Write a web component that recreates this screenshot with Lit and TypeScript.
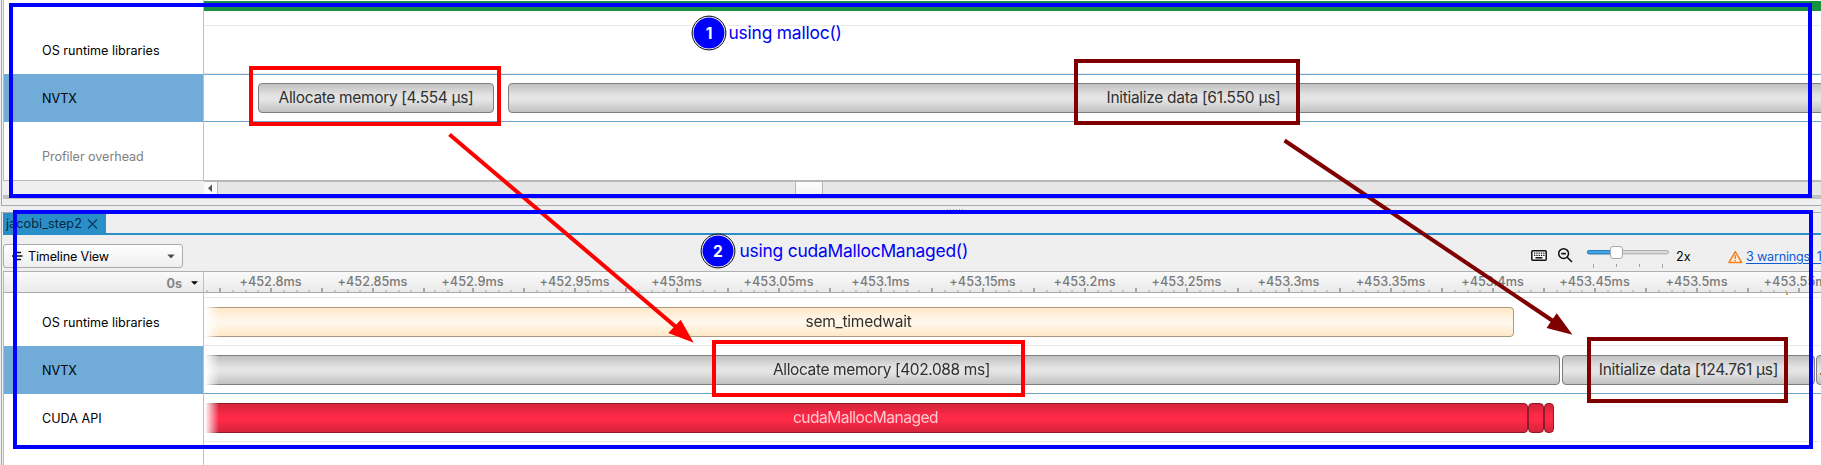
import { LitElement, html, svg, css, nothing } from "lit";
import { customElement, property } from "lit/decorators.js";
import { styleMap } from "lit/directives/style-map.js";

interface Bar {
  gap: number;
  width: number;
  tone: "gray" | "cream" | "red";
  label?: string;
  tracking?: number;
  fade?: boolean;
  start?: boolean;
}

/** One horizontal lane of range bars. */
@customElement("timeline-lane")
class TimelineLane extends LitElement {
  @property({ attribute: false }) bars: Bar[] = [];

  static styles = css`
    :host {
      display: flex;
      overflow: hidden;
      align-items: flex-start;
    }
    .bar {
      box-sizing: border-box;
      flex: none;
      height: 30px;
      border: 1px solid;
      border-radius: 4px;
      display: flex;
      align-items: center;
      justify-content: center;
      font-size: 15.5px;
      line-height: 28px;
      white-space: pre;
      overflow: hidden;
    }
    .start {
      justify-content: flex-start;
      padding-left: 2px;
    }
    .gray {
      color: #303030;
      border-color: #7f7f7f;
      background: linear-gradient(#c1c1c1, #e4e4e4 42%, #e4e4e4 58%, #c1c1c1);
    }
    .cream {
      color: #333029;
      border-color: #a8987f;
      background: linear-gradient(#ffe8c6, #fff7ea 42%, #fff7ea 58%, #ffe8c6);
    }
    .red {
      color: #ffc9d0;
      border-color: #8f1a2b;
      background: linear-gradient(#d3243b, #ff2a47 45%, #ff2a47 58%, #d3243b);
    }
    .fade {
      border-left: 0;
      border-top-left-radius: 0;
      border-bottom-left-radius: 0;
      -webkit-mask-image: linear-gradient(90deg, transparent 1px, #000 15px);
      mask-image: linear-gradient(90deg, transparent 1px, #000 15px);
    }
  `;

  render() {
    return this.bars.map(
      (b) => html`<div
        class="bar ${b.tone} ${b.fade ? "fade" : ""} ${b.start ? "start" : ""}"
        style=${styleMap({
          marginLeft: `${b.gap}px`,
          width: `${b.width}px`,
          letterSpacing: `${b.tracking ?? 0}px`,
        })}
      >${b.label ?? nothing}</div>`
    );
  }
}

const TICK = 102;
const LABELS = [
  "+452.8ms", "+452.85ms", "+452.9ms", "+452.95ms", "+453ms", "+453.05ms",
  "+453.1ms", "+453.15ms", "+453.2ms", "+453.25ms", "+453.3ms", "+453.35ms",
  "+453.4ms", "+453.45ms", "+453.5ms", "+453.55ms",
];

/** Time scale with labels and tick marks. */
@customElement("time-ruler")
class TimeRuler extends LitElement {
  static styles = css`
    :host {
      display: grid;
      overflow: hidden;
    }
    .labels,
    .ticks {
      grid-area: 1 / 1;
    }
    .labels {
      display: flex;
      padding-left: 15.5px;
      font-size: 12.7px;
      font-weight: 500;
      line-height: 19px;
      color: #7a7a7a;
    }
    .label {
      flex: none;
      width: 102px;
      text-align: center;
      white-space: nowrap;
    }
    .label:nth-child(3) {
      margin-left: -2px;
    }
    .ticks {
      align-self: end;
      display: block;
      width: 1617px;
      height: 4px;
    }
  `;

  render() {
    const marks = [];
    for (let i = -5; i <= 124; i++) {
      const x = Math.round((i > 12 ? 64 : 66) + (i * TICK) / 8);
      const big = i % 4 === 0;
      marks.push(svg`<rect x=${x} y=${big ? 0 : 2} width="2" height=${big ? 4 : 2} fill=${big ? "#a9a9a9" : "#c8c8c8"} />`);
    }
    return html`
      <div class="labels">${LABELS.map((l) => html`<span class="label">${l}</span>`)}</div>
      <svg class="ticks" viewBox="0 0 1617 4">${marks}</svg>
    `;
  }
}

@customElement("app-root")
class AppRoot extends LitElement {
  static styles = css`
    :host {
      display: block;
      position: relative;
      width: 1821px;
      height: 465px;
      overflow: hidden;
      background: #efefef;
      color: #000;
      font-family: Inter, "Liberation Sans", sans-serif;
      font-size: 12.6px;
      font-feature-settings: "calt" 0;
    }
    .panel {
      box-sizing: border-box;
      margin-left: 1px;
      border-left: 1px solid #a9a9a9;
      padding-left: 1px;
    }
    .top {
      height: 206px;
      border-bottom: 1px solid #a9a9a9;
    }
    .bottom {
      height: 253px;
      border-top: 1px solid #a9a9a9;
    }
    .frame {
      display: grid;
      grid-template-columns: 201px 1fr;
    }
    .side {
      box-sizing: border-box;
      border-left: 1px solid #b9b9b9;
      border-right: 1px solid #c0c0c0;
      background: #fff;
    }
    .lanes {
      background: #fff;
      min-width: 0;
    }
    .name {
      box-sizing: border-box;
      height: 48px;
      padding-left: 38px;
      display: flex;
      align-items: center;
    }
    .selected {
      background: #71acd9;
    }
    .top .side {
      height: 181px;
      padding-top: 26px;
      border-bottom: 1px solid #b9b9b9;
    }
    .muted {
      height: 68px;
      color: #808080;
      letter-spacing: -0.05px;
    }
    .top .lanes {
      box-sizing: border-box;
      height: 182px;
      padding-top: 1px;
      border-bottom: 2px solid #b8b8b8;
    }
    .green {
      height: 10px;
      background: #189140;
      margin-bottom: 14px;
    }
    .lane {
      box-sizing: border-box;
      height: 48px;
      padding-top: 9px;
      border-bottom: 1px solid #e9e9e9;
    }
    .first {
      border-top: 1px solid #e9e9e9;
      height: 49px;
    }
    .active {
      border-bottom-color: #71a5cb;
    }
    .outlined {
      border-top: 1px solid #6aa9d8;
      padding-top: 8px;
    }
    .scroll {
      margin-left: 201px;
      height: 13px;
      display: flex;
      background: #e6e6e6;
    }
    .scroll-btn {
      width: 13px;
      background: #fbfbfb;
      border-right: 1px solid #bbb;
      flex: none;
    }
    .scroll-btn svg {
      display: block;
    }
    .thumb {
      box-sizing: border-box;
      margin-left: 577px;
      width: 28px;
      border: solid #b8b8b8;
      border-width: 0 1px;
      background: linear-gradient(#fdfdfd, #f3f3f3);
    }
    .edge {
      height: 4px;
      background: #c0c0c0;
    }
    .grip {
      height: 6px;
      display: flex;
      justify-content: center;
      gap: 2px;
      padding-left: 88px;
      align-items: center;
    }
    .dot {
      width: 1px;
      height: 1px;
      background: #a5a5a5;
    }
    .tabs {
      box-sizing: border-box;
      height: 22px;
      border-bottom: 2px solid #2a8fc9;
      display: flex;
    }
    .tab {
      box-sizing: border-box;
      width: 103px;
      height: 20px;
      background: #2a8fc9;
      color: #06283b;
      padding-left: 3px;
      display: flex;
      align-items: center;
      gap: 5px;
      letter-spacing: 0.1px;
      line-height: 20px;
      padding-top: 2px;
    }
    .toolbar {
      height: 36px;
      display: flex;
      align-items: center;
      white-space: nowrap;
      overflow: hidden;
    }
    .combo {
      box-sizing: border-box;
      flex: none;
      width: 180px;
      height: 24px;
      margin-top: 6px;
      border: 1px solid #ababab;
      border-radius: 3px;
      background: linear-gradient(#fff, #efefef);
      display: flex;
      align-items: center;
      padding: 0 7px 0 8px;
      letter-spacing: -0.17px;
    }
    .combo-icon {
      margin-right: 5px;
    }
    .combo-arrow {
      margin-left: auto;
    }
    .tools {
      flex: none;
      margin-left: 1346px;
      margin-top: 7px;
      display: flex;
      align-items: center;
    }
    .tools-art {
      display: block;
      flex: none;
    }
    .zoom {
      width: 52px;
      padding-left: 5px;
    }
    .warn {
      margin-left: 3px;
      color: #0d5bd7;
      text-decoration: underline;
      text-underline-offset: 2px;
      letter-spacing: -0.2px;
    }
    .head {
      box-sizing: border-box;
      height: 22px;
      border-top: 1px solid #b0b0b0;
      border-bottom: 1px solid #a9a9a9;
      background: linear-gradient(#fafafa, #eaeaea);
    }
    .origin {
      border-left: 1px solid #b9b9b9;
      border-right: 1px solid #c0c0c0;
      display: flex;
      align-items: center;
      justify-content: flex-end;
      gap: 9px;
      padding-right: 5px;
      font-weight: 700;
      color: #858585;
      padding-top: 2px;
    }
    .bottom .side,
    .bottom .lanes {
      height: 172px;
    }
    .bottom .side {
      padding-top: 5px;
    }
    .event {
      width: 2px;
      height: 2px;
      margin-left: 1582px;
      margin-bottom: 2px;
      background: #e0a030;
    }
    .overlay {
      position: absolute;
      inset: 0;
      display: block;
    }
    .note {
      font-size: 17.4px;
      fill: #0000f5;
    }
    .num {
      font-size: 15.5px;
      font-weight: 700;
      fill: #fff;
      text-anchor: middle;
    }
  `;

  private callout(x: number, y: number, n: string) {
    return svg`
      <circle cx=${x} cy=${y} r="16.9" fill="#fff" stroke="#000" stroke-width="1" />
      <circle cx=${x} cy=${y} r="15.5" fill="#00f" />
      <text class="num" x=${x} y=${y + 5.8}>${n}</text>`;
  }

  render() {
    return html`
      <section class="panel top">
        <div class="frame">
          <div class="side">
            <div class="name">OS runtime libraries</div>
            <div class="name selected">NVTX</div>
            <div class="name muted">Profiler overhead</div>
          </div>
          <div class="lanes">
            <div class="green"></div>
            <div class="lane first"></div>
            <div class="lane active outlined">
              <timeline-lane .bars=${[
                { gap: 54, width: 236, tone: "gray", label: "Allocate memory [4.554 µs]", tracking: -0.34 },
                { gap: 14, width: 1371, tone: "gray", label: "Initialize data [61.550 µs]", tracking: -0.3 },
              ]}></timeline-lane>
            </div>
          </div>
        </div>
        <div class="scroll">
          <div class="scroll-btn">
            <svg width="13" height="13"><path d="M8 2.5v7.5L4 6.2z" fill="#555" /></svg>
          </div>
          <div class="thumb"></div>
        </div>
        <div class="edge"></div>
      </section>

      <div class="grip">${[0, 1, 2, 3, 4, 5].map(() => html`<i class="dot"></i>`)}</div>

      <section class="panel bottom">
        <div class="tabs">
          <div class="tab">
            jacobi_step2
            <svg width="11" height="11"><path d="M1 .5l9 9M10 .5l-9 9" stroke="#0b3a55" stroke-width="1.3" /></svg>
          </div>
        </div>
        <div class="toolbar">
          <div class="combo">
            <svg class="combo-icon" width="11" height="12">
              <path d="M3 2.5h6M0 6h10.5M2 9.5h7" stroke="#111" stroke-width="1.4" />
            </svg>
            Timeline View
            <svg class="combo-arrow" width="8" height="5"><path d="M.3.5h7.4L4 4.5z" fill="#4c4c4c" /></svg>
          </div>
          <div class="tools">
            <svg class="tools-art" width="142" height="26">
              <rect x="2.8" y="6.8" width="14.4" height="9.4" rx="1" fill="#fff" stroke="#111" stroke-width="1.5" />
              <path d="M5 9.2h10.5M5 11.3h10.5" stroke="#111" stroke-width="1.3" stroke-dasharray="1.3 1" />
              <path d="M6.5 13.8h7" stroke="#111" stroke-width="1.5" />
              <circle cx="34.6" cy="9.6" r="4.9" fill="none" stroke="#111" stroke-width="1.5" />
              <path d="M32.3 9.6h4.6M38.2 13.2l4.8 4.8" stroke="#111" stroke-width="1.6" />
              <rect x="58.5" y="6.5" width="81" height="3.4" rx="1.6" fill="#d9d9d9" stroke="#adadad" />
              <path d="M82 6.5H60a1.7 1.7 0 0 0 0 3.4h22z" fill="#3fa3e4" stroke="#2b7fb8" />
              <rect x="81.5" y="2.5" width="12" height="12" rx="2.5" fill="#fcfcfc" stroke="#a8a8a8" />
              <path d="M64.5 20v4M87.5 20v3M110.5 20v3M133.5 20v4" stroke="#a5a5a5" />
            </svg>
            <span class="zoom">2x</span>
            <svg class="tools-art" width="15" height="14">
              <path d="M7.3 1.6L13.6 12.5H1z" fill="#fff1e2" stroke="#f58220" stroke-width="1.5" stroke-linejoin="round" />
              <path d="M7.3 5v4M7.3 10v1.5" stroke="#f58220" stroke-width="1.5" />
            </svg>
            <span class="warn">3 warnings, 15 messages</span>
          </div>
        </div>
        <div class="frame">
          <div class="head origin">
            0s
            <svg width="7" height="4"><path d="M0 .3h7L3.5 3.7z" fill="#000" /></svg>
          </div>
          <time-ruler class="head"></time-ruler>
          <div class="side">
            <div class="name">OS runtime libraries</div>
            <div class="name selected">NVTX</div>
            <div class="name">CUDA API</div>
          </div>
          <div class="lanes">
            <div class="event"></div>
            <div class="lane first">
              <timeline-lane .bars=${[
                { gap: 0, width: 1310, tone: "cream", label: "sem_timedwait", tracking: -0.23, fade: true },
              ]}></timeline-lane>
            </div>
            <div class="lane active">
              <timeline-lane .bars=${[
                { gap: 0, width: 1356, tone: "gray", label: "Allocate memory [402.088 ms]", tracking: -0.39, fade: true },
                { gap: 2, width: 253, tone: "gray", label: "Initialize data [124.761 µs]", tracking: -0.27 },
                { gap: 1, width: 40, tone: "gray", label: "...", start: true },
              ]}></timeline-lane>
            </div>
            <div class="lane">
              <timeline-lane .bars=${[
                { gap: 0, width: 1324, tone: "red", label: "cudaMallocManaged", tracking: -0.47, fade: true },
                { gap: 0, width: 16, tone: "red" },
                { gap: 0, width: 10, tone: "red" },
              ]}></timeline-lane>
            </div>
          </div>
        </div>
      </section>

      <svg class="overlay" width="1821" height="465" viewBox="0 0 1821 465">
        <path d="M449.5 134.5L676 327" stroke="#f00" stroke-width="4" />
        <path d="M693.7 342.7L680.7 319.8L668.3 333z" fill="#f00" />
        <path d="M1284.5 140.5L1553 321" stroke="#800000" stroke-width="4" />
        <path d="M1572.5 334.8L1556.7 313.3L1546.5 328z" fill="#800000" />
        <g fill="none" stroke-width="4">
          <rect x="251" y="68" width="248" height="56" stroke="#f00" />
          <rect x="714" y="342" width="309" height="53" stroke="#f00" />
          <rect x="1076" y="61" width="222" height="62" stroke="#800000" />
          <rect x="1589" y="339" width="197" height="62" stroke="#800000" />
          <rect x="11" y="5" width="1799" height="191" stroke="#00f" />
          <rect x="15" y="212" width="1796" height="235" stroke="#00f" />
        </g>
        ${this.callout(709, 33, "1")}
        ${this.callout(718, 251, "2")}
        <text class="note" x="728.5" y="39.1" letter-spacing="-0.2">using malloc()</text>
        <text class="note" x="739.5" y="257" letter-spacing="-0.22">using cudaMallocManaged()</text>
      </svg>
    `;
  }
}
